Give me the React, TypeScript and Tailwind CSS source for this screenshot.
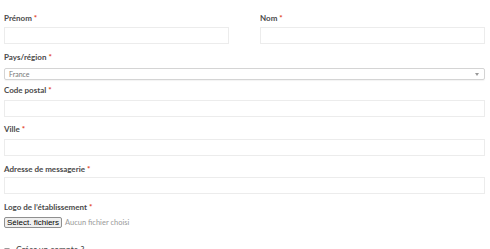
import React from 'react';

const Label = ({ text, className = '' }: { text: string; className?: string }) => (
  <label className={`block text-[8px] leading-[10px] font-bold text-[#4a4a4a] ${className}`}>
    {text} <span className="text-[#e2401c]">*</span>
  </label>
);

const TextInput = () => (
  <input type="text" className="block w-full h-[17px] border border-[#ececec] bg-white outline-none" />
);

export default function App() {
  return (
    <div className="w-[490px] h-[249px] overflow-hidden bg-white pl-1 pr-[5px] pt-[13px] font-['Lato','Liberation_Sans',sans-serif]">
      <div className="flex justify-between">
        <div className="w-[225px]">
          <Label text="Prénom" className="mb-1" />
          <TextInput />
        </div>
        <div className="w-[225px]">
          <Label text="Nom" className="mb-1" />
          <TextInput />
        </div>
      </div>

      <div className="mt-2">
        <Label text="Pays/région" className="mb-[6px]" />
        <div className="flex items-center justify-between h-[12px] border border-[#d4d4d4] rounded-[2px] shadow-[0_1px_1px_rgba(0,0,0,0.05)] pl-1 pr-[5px]">
          <span className="text-[7px] leading-none text-[#777]">France</span>
          <svg width="4" height="3" viewBox="0 0 4 3">
            <path d="M0 0h4L2 3z" fill="#999" />
          </svg>
        </div>
      </div>

      <div className="mt-[5px]">
        <Label text="Code postal" className="mb-[5px]" />
        <TextInput />
      </div>

      <div className="mt-[7px]">
        <Label text="Ville" className="mb-[5px]" />
        <TextInput />
      </div>

      <div className="mt-2">
        <Label text="Adresse de messagerie" className="mb-[3px]" />
        <TextInput />
      </div>

      <div className="mt-2">
        <Label text="Logo de l’établissement" className="mb-[5px]" />
        <div className="flex items-center gap-[3px]">
          <button className="h-[11px] px-[2px] border border-[#8f8f8f] rounded-[2px] bg-[#efefef] text-[8px] leading-none text-black font-['Liberation_Sans',sans-serif]">
            Sélect. fichiers
          </button>
          <span className="text-[7.5px] text-[#999]">Aucun fichier choisi</span>
        </div>
      </div>

      <div className="mt-[16px] flex items-center gap-[6px]">
        <span className="w-[6px] h-[6px] border border-[#999] rounded-[1px] bg-white" />
        <span className="text-[8.5px] text-[#444]">Créer un compte ?</span>
      </div>
    </div>
  );
}
